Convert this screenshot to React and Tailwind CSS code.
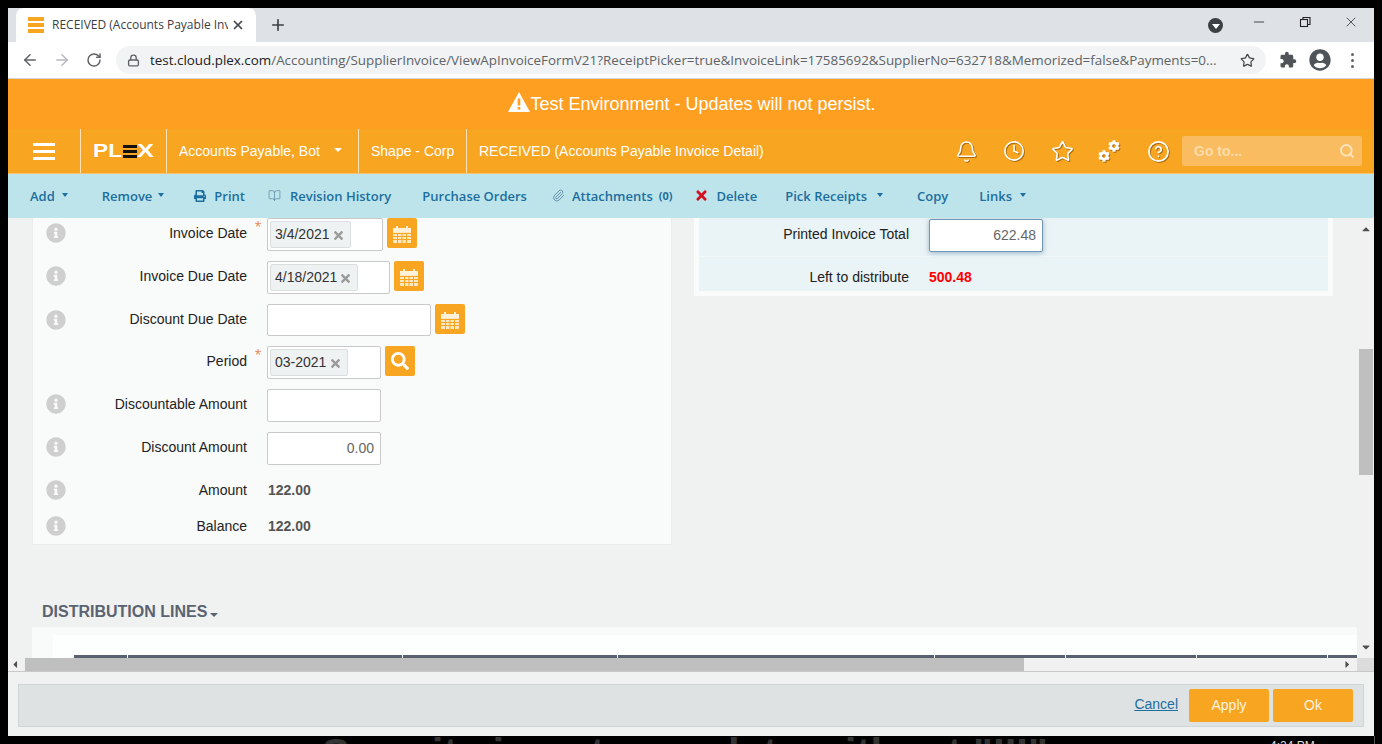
import React from 'react';
import { ArrowLeft, ArrowRight, RotateCw, Lock, Star, Plus, X, Minus, Bell, Clock, CircleHelp, Search, BookOpen, Paperclip } from 'lucide-react';
import { FaPrint, FaInfoCircle, FaUserCircle, FaSearch, FaTimes, FaCaretDown, FaCaretUp, FaCaretLeft, FaCaretRight, FaCog } from 'react-icons/fa';

const Caret = ({ className }) => <span className={`inline-block w-0 h-0 border-x-[4px] border-x-transparent border-t-[4px] ${className}`} />;

const SmallCaret = ({ className }) => <span className={`inline-block w-0 h-0 border-x-[3.5px] border-x-transparent border-t-[4px] border-t-[#1c6e9e] -mt-[3px] ${className}`} />;

const CalendarIcon = () => (
    <svg width="18" height="17" viewBox="0 0 18 17" className="mt-[2px]">
        <rect x="0" y="2" width="18" height="15" rx="1" fill="#fde8c2" />
        <rect x="0" y="2" width="18" height="4" fill="#fff1d8" />
        <rect x="3" y="0" width="2" height="4" fill="#fff1d8" />
        <rect x="13" y="0" width="2" height="4" fill="#fff1d8" />
        <path d="M0 7.5h18M0 10.5h18M0 13.5h18M4.5 7v10M9 7v10M13.5 7v10" stroke="#f8a521" strokeWidth="1" />
    </svg>
);

const PuzzleIcon = () => (
    <svg width="18" height="18" viewBox="0 0 24 24" fill="#505458" className="ml-[13px]">
        <path d="M20.5 11H19V7c0-1.1-.9-2-2-2h-4V3.5C13 2.12 11.88 1 10.5 1S8 2.12 8 3.5V5H4c-1.1 0-1.99.9-1.99 2v3.8H3.5c1.49 0 2.7 1.21 2.7 2.7s-1.21 2.7-2.7 2.7H2V20c0 1.1.9 2 2 2h3.8v-1.5c0-1.49 1.21-2.7 2.7-2.7 1.49 0 2.7 1.21 2.7 2.7V22H17c1.1 0 2-.9 2-2v-4h1.5c1.38 0 2.5-1.12 2.5-2.5S21.88 11 20.5 11z" />
    </svg>
);

const Action = ({ ml, children, className = '' }) => (
    <span className={`flex items-center whitespace-nowrap ${ml} ${className}`}>{children}</span>
);

const Chip = ({ children, width }) => (
    <span className={`flex items-center justify-between h-[27px] ml-[2px] pl-[4px] pr-[5px] bg-[#eff2f2] border border-[#dcdfdf] rounded-[2px] text-[14px] text-[#333] ${width}`}>
        {children}
        <FaTimes className="text-[#9b9b9b] text-[13px] mt-[2px]" />
    </span>
);

const FieldInput = ({ width, chip, chipWidth, right }) => (
    <div className={`flex items-center h-full bg-white border border-[#c9c9c9] rounded-[2px] ${width}`}>
        {chip && <Chip width={chipWidth}>{chip}</Chip>}
        {right && <span className="ml-auto pr-[6px] text-[14px] text-[#666]">{right}</span>}
    </div>
);

const Row = ({ label, info = true, required, mt, h = 'h-[33px]', labelClass = '-mt-[3px]', children }) => (
    <div className={`flex items-center ${h} ${mt}`}>
        <span className={`w-[33px] pl-[13px] shrink-0 ${labelClass}`}>
            {info && <FaInfoCircle className="block text-[#cfcfcf] text-[20px]" />}
        </span>
        <span className={`w-[181px] text-right text-[14px] text-[#222] ${labelClass}`}>{label}</span>
        <span className="w-[20px] pl-[8px] self-start text-[16px] leading-[20px] text-[#e9905a]">{required ? '*' : ''}</span>
        {children}
    </div>
);

const OrangeBtn = ({ children }) => (
    <span className="flex items-center justify-center w-[30px] h-[30px] ml-[4px] self-start bg-[#f8a521] rounded-[2px]">{children}</span>
);

const Logo = () => (
    <svg width="62" height="16" viewBox="0 0 62 16" style={{ fontFamily: '"Liberation Sans", sans-serif', fontWeight: 700 }}>
        <text x="0" y="14" fontSize="18" fill="#fff" textLength="29" lengthAdjust="spacingAndGlyphs">PL</text>
        <rect x="30" y="2" width="14" height="3" fill="#111" />
        <rect x="30" y="7" width="14" height="3" fill="#111" />
        <rect x="30" y="12" width="14" height="3" fill="#111" />
        <text x="44" y="14" fontSize="18" fill="#fff" textLength="17" lengthAdjust="spacingAndGlyphs">X</text>
    </svg>
);

const Gears = () => (
    <span className="relative block w-[22px] h-[22px] drop-shadow-[1px_1px_0_rgba(120,70,0,0.6)]">
        <FaCog className="absolute left-0 bottom-0 text-white text-[12px]" />
        <FaCog className="absolute right-0 top-0 text-white text-[12px]" />
    </span>
);

const navIcon = 'text-white drop-shadow-[1px_1px_0_rgba(120,70,0,0.6)]';

export default function App() {
    return (
        <div className="w-[1382px] h-[744px] bg-black overflow-hidden pt-2 font-['Liberation_Sans',sans-serif]">
            <div className="mx-2 w-[1366px] h-[728px] flex flex-col bg-[#f0f2f2]">
                {/* browser tabs */}
                <div className="flex items-end h-[34px] shrink-0 bg-[#dee1e6] pl-2">
                    <div className="flex items-center w-[240px] h-[34px] bg-white rounded-t-[8px] pl-[12px] pr-[11px] font-['Open_Sans',sans-serif]">
                        <span className="flex flex-col gap-[2px] w-[16px] shrink-0">
                            <i className="block h-[4px] bg-[#f8a521]" />
                            <i className="block h-[4px] bg-[#f8a521]" />
                            <i className="block h-[4px] bg-[#f8a521]" />
                        </span>
                        <span className="ml-[8px] w-[176px] overflow-hidden whitespace-nowrap text-[12px] text-[#3c4043]">RECEIVED (Accounts Payable Invoice Detail)</span>
                        <X size={14} strokeWidth={3} className="ml-auto text-[#45494d]" />
                    </div>
                    <Plus size={18} strokeWidth={2.2} className="ml-[13px] mb-[8px] text-[#3c4043]" />
                    <span className="ml-auto mb-[9px] flex items-center justify-center w-[15px] h-[15px] rounded-full bg-[#3c4043]">
                        <Caret className="border-t-white border-x-[4px] border-t-[5px] mt-[2px]" />
                    </span>
                    <div className="flex items-start self-start pt-[6px] pl-[28px] pr-[15px] gap-[30px] text-[#222]">
                        <Minus size={16} strokeWidth={1.2} />
                        <svg width="16" height="16" viewBox="0 0 16 16" fill="none" stroke="#222" strokeWidth="1.1">
                            <rect x="3.5" y="5.5" width="7" height="7" />
                            <path d="M6 5.5V3.5h7v7h-2.5" />
                        </svg>
                        <X size={16} strokeWidth={1.1} />
                    </div>
                </div>
                {/* address bar */}
                <div className="flex items-center h-[37px] shrink-0 bg-white border-b border-[#d3d6da] text-[#5f6368]">
                    <ArrowLeft size={18} strokeWidth={2} className="ml-[13px]" />
                    <ArrowRight size={18} strokeWidth={2} className="ml-[14px] text-[#b6b9bd]" />
                    <RotateCw size={16} strokeWidth={2.2} className="ml-[15px]" />
                    <div className="flex items-center w-[1150px] h-[28px] ml-[14px] rounded-full bg-[#f1f3f4] pl-[11px] pr-[11px]">
                        <Lock size={13} strokeWidth={2.5} className="text-[#5f6368] shrink-0" />
                        <span className="ml-[10px] w-[1072px] overflow-hidden whitespace-nowrap font-['Open_Sans',sans-serif] text-[13.4px] text-[#5f6368]">
                            <span className="text-[#202124]">test.cloud.plex.com</span>/Accounting/SupplierInvoice/ViewApInvoiceFormV21?ReceiptPicker=true&amp;InvoiceLink=17585692&amp;SupplierNo=632718&amp;Memorized=false&amp;Payments=0...
                        </span>
                        <Star size={15} strokeWidth={2} className="ml-auto shrink-0 text-[#45494d]" />
                    </div>
                    <PuzzleIcon />
                    <FaUserCircle className="ml-[12px] text-[22px] text-[#505458]" />
                    <span className="ml-[20px] flex flex-col gap-[3px]">
                        <i className="block w-[3px] h-[3px] rounded-full bg-[#5f6368]" />
                        <i className="block w-[3px] h-[3px] rounded-full bg-[#5f6368]" />
                        <i className="block w-[3px] h-[3px] rounded-full bg-[#5f6368]" />
                    </span>
                </div>
                {/* test banner */}
                <div className="flex items-center justify-center h-[50px] shrink-0 bg-[#ff9f22] text-white text-[18px] pl-[2px]">
                    <svg width="22" height="20" viewBox="0 0 22 20" className="mb-[4px]">
                        <path d="M11 0 22 20H0Z" fill="#fff" />
                        <rect x="9.7" y="6.5" width="2.6" height="7" fill="#ff9f22" />
                        <rect x="9.7" y="15" width="2.6" height="2.6" fill="#ff9f22" />
                    </svg>
                    <span>Test Environment - Updates will not persist.</span>
                </div>
                {/* plex nav */}
                <div className="flex items-stretch h-[45px] shrink-0 bg-[#f8a521] border-b border-[#fcc26c] text-white text-[14px]">
                    <div className="flex flex-col justify-center gap-[4px] w-[73px] pl-[25px] border-r border-[#fde2b8]">
                        <i className="block w-[22px] h-[3px] bg-white" />
                        <i className="block w-[22px] h-[3px] bg-white" />
                        <i className="block w-[22px] h-[3px] bg-white" />
                    </div>
                    <div className="flex items-center w-[86px] pl-[12px] border-r border-[#fde2b8]"><Logo /></div>
                    <div className="flex items-center w-[192px] pl-[12px] border-r border-[#fde2b8]">
                        Accounts Payable, Bot
                        <Caret className="border-t-white ml-[14px] -mt-[3px]" />
                    </div>
                    <div className="flex items-center w-[108px] pl-[12px] border-r border-[#fde2b8]">Shape - Corp</div>
                    <div className="flex items-center pl-[12px]">RECEIVED (Accounts Payable Invoice Detail)</div>
                    <div className="flex items-center ml-auto pr-[12px]">
                        <Bell size={23} strokeWidth={1.6} className={navIcon} />
                        <Clock size={22} strokeWidth={1.8} className={`ml-[25px] ${navIcon}`} />
                        <Star size={23} strokeWidth={1.7} className={`ml-[26px] ${navIcon}`} />
                        <span className="ml-[24px]"><Gears /></span>
                        <CircleHelp size={23} strokeWidth={1.8} className={`ml-[27px] ${navIcon}`} />
                        <div className="flex items-center w-[180px] h-[30px] ml-[12px] pl-[12px] pr-[7px] rounded-[2px] bg-[#f9bc60] font-bold text-[#fcdca9]">
                            Go to...
                            <Search size={16} strokeWidth={3} className="ml-auto text-[#fde3b8]" />
                        </div>
                    </div>
                </div>
                {/* action bar */}
                <div className="flex items-center h-[44px] shrink-0 pt-[1px] bg-[#bde4eb] font-['Open_Sans',sans-serif] font-semibold text-[13px] text-[#1c6e9e]">
                    <Action ml="ml-[22px]">Add<SmallCaret className="ml-[7px]" /></Action>
                    <Action ml="ml-[34px]">Remove<SmallCaret className="ml-[6px]" /></Action>
                    <Action ml="ml-[30px]"><FaPrint className="text-[12px] mr-[8px] -mt-[2px]" />Print</Action>
                    <Action ml="ml-[23px]"><BookOpen size={13} strokeWidth={1.2} className="mr-[9px] -mt-[2px] text-[#4d7f9c]" />Revision History</Action>
                    <Action ml="ml-[31px]">Purchase Orders</Action>
                    <Action ml="ml-[25px]"><Paperclip size={13} strokeWidth={1.5} className="mr-[7px] -mt-[2px] text-[#4d7f9c]" />Attachments<span className="ml-[6px] text-[11px] font-bold">(0)</span></Action>
                    <Action ml="ml-[22px]"><FaTimes className="text-[15px] mr-[7px] -mt-[2px] text-[#d0121f]" />Delete</Action>
                    <Action ml="ml-[28px]">Pick Receipts<SmallCaret className="ml-[10px]" /></Action>
                    <Action ml="ml-[34px]">Copy</Action>
                    <Action ml="ml-[31px]">Links<SmallCaret className="ml-[8px]" /></Action>
                </div>
                {/* scrolled content */}
                <div className="flex h-[440px] shrink-0 overflow-hidden">
                    <div className="w-[1349px] shrink-0 flex flex-col pl-[24px]">
                        <div className="flex items-start gap-[22px]">
                            <div className="w-[640px] h-[327px] shrink-0 bg-[#f9fafa] border-x border-b border-[#ececec]">
                                <Row label="Invoice Date" required>
                                    <FieldInput width="w-[116px]" chip="3/4/2021" chipWidth="w-[81px]" />
                                    <OrangeBtn><CalendarIcon /></OrangeBtn>
                                </Row>
                                <Row label="Invoice Due Date" mt="mt-[10px]">
                                    <FieldInput width="w-[123px]" chip="4/18/2021" chipWidth="w-[88px]" />
                                    <OrangeBtn><CalendarIcon /></OrangeBtn>
                                </Row>
                                <Row label="Discount Due Date" mt="mt-[10px]" h="h-[32px]" labelClass="-mt-[1px]">
                                    <FieldInput width="w-[164px]" />
                                    <OrangeBtn><CalendarIcon /></OrangeBtn>
                                </Row>
                                <Row label="Period" info={false} required mt="mt-[10px]">
                                    <FieldInput width="w-[114px]" chip="03-2021" chipWidth="w-[78px]" />
                                    <OrangeBtn><FaSearch className="text-white text-[18px]" /></OrangeBtn>
                                </Row>
                                <Row label="Discountable Amount" mt="mt-[10px]">
                                    <FieldInput width="w-[114px]" />
                                </Row>
                                <Row label="Discount Amount" mt="mt-[10px]">
                                    <FieldInput width="w-[114px]" right="0.00" />
                                </Row>
                                <Row label="Amount" mt="mt-[7px]" h="h-[36px]" labelClass="">
                                    <span className="ml-[1px] text-[14px] font-bold text-[#555]">122.00</span>
                                </Row>
                                <Row label="Balance" h="h-[36px]" labelClass="">
                                    <span className="ml-[1px] text-[14px] font-bold text-[#555]">122.00</span>
                                </Row>
                            </div>
                            <div className="w-[639px] h-[78px] shrink-0 bg-[#f9fafa] border-x-[5px] border-b-[5px] border-[#fafbfb]">
                                <div className="flex items-center h-[39px] bg-[#eaf3f5] border-b border-[#f2f7f8]">
                                    <span className="w-[210px] text-right text-[14px] text-[#222] -mt-[6px]">Printed Invoice Total</span>
                                    <span className="flex items-center justify-end w-[114px] h-[33px] ml-[20px] -mt-[4px] pt-[1px] pr-[6px] bg-white border border-[#6f98b5] rounded-[2px] shadow-[0_1px_5px_rgba(70,120,160,0.5)] text-[14px] text-[#666]">622.48</span>
                                </div>
                                <div className="flex items-center h-[34px] pt-[7px] bg-[#eaf3f5]">
                                    <span className="w-[210px] text-right text-[14px] text-[#222]">Left to distribute</span>
                                    <span className="ml-[20px] text-[14px] font-bold text-[#ff0000]">500.48</span>
                                </div>
                            </div>
                        </div>
                        <div className="mt-[57px] ml-[10px] flex items-center h-[20px] text-[16px] font-bold text-[#5b6270]">
                            DISTRIBUTION LINES
                            <Caret className="border-t-[#5b6270] ml-[3px] mt-[6px]" />
                        </div>
                        <div className="mt-[5px] h-[31px] bg-[#f9fafa] pl-[21px] pt-[8px]">
                            <div className="h-[23px] bg-[#fdfefe] pl-[21px] pt-[20px]">
                                <div className="flex h-[3px] gap-[1px]">
                                    <i className="block h-[3px] w-[53px] bg-[#596070]" />
                                    <i className="block h-[3px] w-[274px] bg-[#596070]" />
                                    <i className="block h-[3px] w-[214px] bg-[#596070]" />
                                    <i className="block h-[3px] w-[316px] bg-[#596070]" />
                                    <i className="block h-[3px] w-[130px] bg-[#596070]" />
                                    <i className="block h-[3px] w-[130px] bg-[#596070]" />
                                    <i className="block h-[3px] w-[130px] bg-[#596070]" />
                                    <i className="block h-[3px] w-[29px] bg-[#596070]" />
                                </div>
                            </div>
                        </div>
                    </div>
                    {/* vertical scrollbar */}
                    <div className="flex flex-col items-center w-[17px] bg-[#f1f1f1] text-[#505050]">
                        <FaCaretUp className="text-[12px] mt-[5px]" />
                        <div className="w-[14px] h-[126px] mt-[114px] bg-[#bfbfbf]" />
                        <FaCaretDown className="text-[12px] mt-auto mb-[5px]" />
                    </div>
                </div>
                {/* horizontal scrollbar */}
                <div className="flex items-center h-[14px] shrink-0 bg-[#f1f1f1] border-b border-[#c8caca] text-[#505050]">
                    <FaCaretLeft className="text-[11px] ml-[3px] w-[8px]" />
                    <div className="w-[999px] h-[13px] ml-[6px] bg-[#bfbfbf]" />
                    <FaCaretRight className="text-[11px] ml-[318px]" />
                    <div className="ml-auto w-[17px] h-full bg-[#dcdcdc]" />
                </div>
                {/* footer */}
                <div className="flex-1 px-[10px] pt-[12px]">
                    <div className="flex items-center justify-end h-[43px] w-[1346px] bg-[#dfe2e3] border border-[#cfd6d6] pr-[10px] text-[14px]">
                        <a className="text-[#1c6e9e] underline mr-[11px] -mt-[2px]">Cancel</a>
                        <span className="flex items-center justify-center w-[80px] h-[33px] bg-[#f8a521] rounded-[2px] text-[#fdf3e0]">Apply</span>
                        <span className="flex items-center justify-center w-[80px] h-[33px] ml-[4px] bg-[#f8a521] rounded-[2px] text-[#fdf3e0]">Ok</span>
                    </div>
                </div>
            </div>
            {/* desktop behind the window, only the top of it shows */}
            <div className="flex h-[8px] overflow-hidden pl-[322px] leading-none">
                <span className="w-[948px] shrink-0 text-[42px] font-bold text-[#333] whitespace-nowrap -mt-[3px]">See city is not complete without "III"</span>
                <span className="text-[12px] text-[#ddd] whitespace-nowrap mt-[4px]">4:24 PM</span>
                <i className="block w-[1px] h-full ml-[59px] bg-[#555]" />
            </div>
        </div>
    );
}
